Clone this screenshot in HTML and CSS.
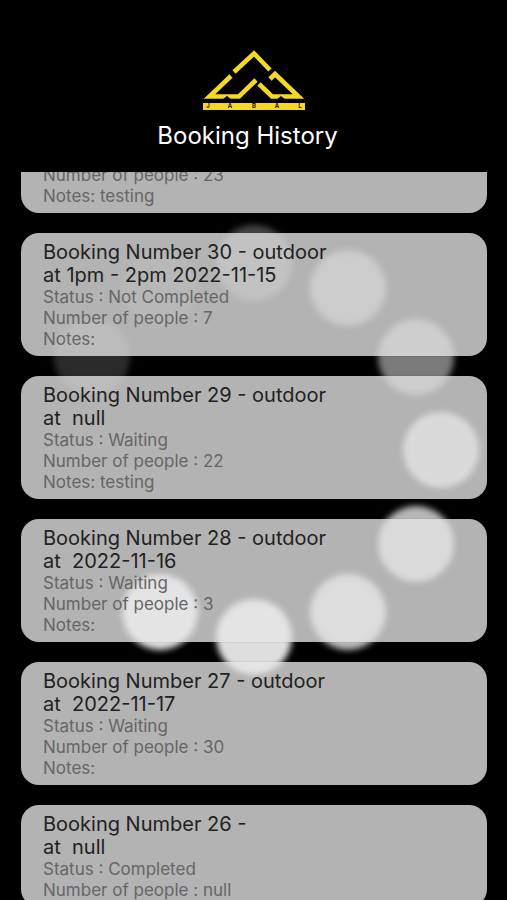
FILE: index.html
```
<!DOCTYPE html>
<html lang="en">

<head>
  <meta charset="UTF-8" />
  <meta name="viewport" content="width=device-width,initial-scale=1" />
  <title>Booking History</title>
  <link rel="stylesheet" href="styles.css">
</head>

<body>
  <svg class="spinner" viewBox="0 0 460 460" fill="#fff" aria-hidden="true">
    <circle cx="230" cy="43" r="38" opacity=".27" />
    <circle cx="324" cy="68" r="38" opacity=".46" />
    <circle cx="392" cy="137" r="38" opacity=".48" />
    <circle cx="417" cy="230" r="38" opacity=".7" />
    <circle cx="392" cy="324" r="38" opacity=".72" />
    <circle cx="324" cy="392" r="38" opacity=".74" />
    <circle cx="230" cy="417" r="38" opacity=".87" />
    <circle cx="136" cy="392" r="38" opacity=".87" />
    <circle cx="68" cy="137" r="38" opacity=".17" />
    <circle cx="136" cy="68" r="38" opacity=".1" />
  </svg>

  <header class="header">
    <svg class="logo" viewBox="0 0 102 60" role="img" aria-label="Jabal">
      <g fill="none" stroke="#f5d728" stroke-width="4.6">
        <path d="M31 22 51 3.5 67 20" />
        <path d="M28 26 6.500 46.500H36L53 30" />
        <path d="m67 29 5-5 23.500 22.500H69L56 34" />
      </g>
      <path d="m19 50 5-4 5 4zM73 50l5-4 5 4z" fill="#000" />
      <rect y="53" width="102" height="7" fill="#f5d728" />
      <g class="logo-text">
        <text x="5" y="58">J</text>
        <text x="27" y="58">A</text>
        <text x="51" y="58">B</text>
        <text x="74" y="58">A</text>
        <text x="97" y="58">L</text>
      </g>
    </svg>
    <h1>Booking History</h1>
  </header>

  <main class="history">
    <ul class="list">
      <li class="card card-cut">
        <p>Number of people : 23</p>
        <p>Notes: testing</p>
      </li>
      <li class="card">
        <h2>Booking Number 30 - outdoor<br>at 1pm - 2pm 2022-11-15</h2>
        <p>Status : Not Completed</p>
        <p>Number of people : 7</p>
        <p>Notes:</p>
      </li>
      <li class="card">
        <h2>Booking Number 29 - outdoor<br>at  null</h2>
        <p>Status : Waiting</p>
        <p>Number of people : 22</p>
        <p>Notes: testing</p>
      </li>
      <li class="card">
        <h2>Booking Number 28 - outdoor<br>at  2022-11-16</h2>
        <p>Status : Waiting</p>
        <p>Number of people : 3</p>
        <p>Notes:</p>
      </li>
      <li class="card">
        <h2>Booking Number 27 - outdoor<br>at  2022-11-17</h2>
        <p>Status : Waiting</p>
        <p>Number of people : 30</p>
        <p>Notes:</p>
      </li>
      <li class="card">
        <h2>Booking Number 26 -<br>at  null</h2>
        <p>Status : Completed</p>
        <p>Number of people : null</p>
      </li>
    </ul>
  </main>
</body>

</html>
```
FILE: styles.css
```
* {
  box-sizing: border-box;
  margin: 0;
  padding: 0;
}

body {
  position: relative;
  display: flex;
  flex-direction: column;
  height: 100vh;
  overflow: hidden;
  background: #000;
  font-family: Inter, Roboto, sans-serif;
}

/* loading ring, shows through the cards */
.spinner {
  position: absolute;
  inset: 0;
  margin: auto;
  width: 460px;
  height: 460px;
  filter: blur(3px);
}

.header {
  display: flex;
  flex-direction: column;
  align-items: center;
  padding: 50px 20px 21px;
}

.logo {
  width: 102px;
  height: 60px;
}

.logo-text {
  font-size: 6px;
  font-weight: 600;
  text-anchor: middle;
}

.header h1 {
  margin-top: 11px;
  padding-right: 12px;
  color: #fff;
  font-size: 24px;
  font-weight: 400;
  line-height: 30px;
}

.history {
  position: relative;
  flex: 1;
  min-height: 0;
  overflow: hidden;
  padding: 0 20px 0 21px;
}

.list {
  display: flex;
  flex-direction: column;
  gap: 20px;
  margin-top: -7px;
  list-style: none;
}

.card {
  padding: 8px 22px 6px;
  border-radius: 18px;
  background: rgba(230, 230, 230, .78);
  box-shadow: 0 0 1px rgba(0, 0, 0, .6);
}

.card-cut {
  padding-top: 0;
  border-radius: 0 0 18px 18px;
}

.card h2 {
  color: #222;
  font-size: 20px;
  font-weight: 400;
  line-height: 23px;
  white-space: pre-wrap;
}

.card p {
  color: #666;
  font-size: 17px;
  line-height: 21px;
}
```
